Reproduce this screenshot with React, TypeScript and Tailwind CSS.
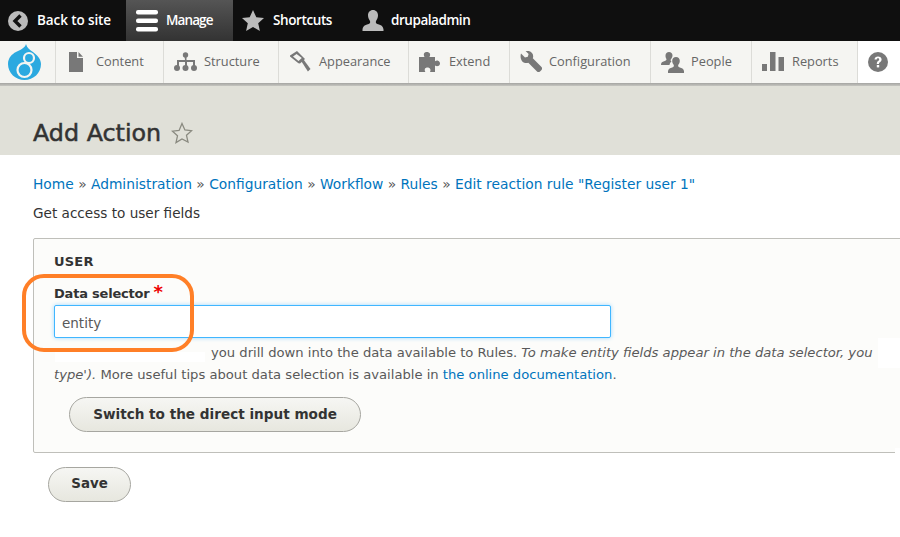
import React from "react";

const G = "#787878";
const FileI = () => <svg width={20} height={20} viewBox="0 0 20 20" className="shrink-0"><path fill={G} d="M3 0h8v6h6v14H3z" /><path fill={G} d="M12.500 0L17 4.700h-4.500z" /></svg>;
const TreeI = () => (
  <svg width={23} height={20} viewBox="0 0 23 20" className="shrink-0"><g fill={G}><circle cx="11.500" cy="3" r="2.700" /><circle cx="3" cy="16" r="3" /><circle cx="11.500" cy="16" r="3" /><circle cx="20" cy="16" r="3" /><path d="M10.500 4h2v4h8.500v6h-2v-4h-6v4h-2v-4h-6v4h-2V8h8z" /></g></svg>
);
const HammerI = () => (
  <svg width={22} height={22} viewBox="0 0 22 22" className="shrink-0"><g fill={G}><path d="M8 0l8 8-5 4.500-1.600-.2L1 5.500 1 4.500zM7.600 3L4 5.500l5.500 4.500 3.300-3z" fillRule="evenodd" /><path d="M12.500 10.500l2-2 7 9.500-2.600 2.500z" /></g></svg>
);
const PuzzleI = () => <svg width={22} height={20} viewBox="0 0 22 20" className="shrink-0"><path fill={G} d="M0 5h5.500C5 4 4.500 3 5 1.600 5.600.4 7 0 8 0s2.600.5 3 1.700c.3 1.200 0 2.300-.6 3.300H16v4.200c1-.6 2-.9 3-.5 1.500.5 2 1.700 2 2.800s-.6 2.200-2 2.600c-1 .3-2 0-3-.6V20h-5c.5-1 .7-2 .2-3-.5-1-1.500-1.500-2.700-1.500S6.200 16 5.800 17c-.3 1 0 2 .5 3H0z" /></svg>;
const WrenchI = () => <svg width={22} height={22} viewBox="0 0 22 22" className="shrink-0"><path fill={G} d="M1 2.500l4 4 2.800-.8.800-2.700-4-4C8 -.5 10.500.3 12 2c1.300 1.500 1.500 3.500.8 5.200L21.500 16c.8.800.8 2 0 3l-1.500 1.500c-.9.800-2.200.8-3 0l-8.700-8.800C6.500 12.500 4 12 2.300 10.500.5 8.700.2 5 1 2.500z" /></svg>;
const PeopleI = () => <svg width={23} height={21} viewBox="0 0 23 21" className="shrink-0"><g fill={G}><path d="M8 0c2 0 3.500 1.500 3.500 3.500 0 1.500-.8 2.700-1.600 3.700-.5 1-.3 1.800.6 2.300-1.200 1-1.800 2-2 3.500H0c0-2 .5-3 2.500-3.500 2-.7 3-1 3-2.500C4.700 6 4.500 4.800 4.500 3.500 4.500 1.500 6 0 8 0z" /><path d="M15 5c2.200 0 3.800 1.600 3.800 3.800 0 1.600-.6 3-1.500 4-.5 1.500 0 2.200 1.500 2.800 2 .7 3.700 1 4.200 3.400v2H7v-2c.5-2.400 2.200-2.700 4.200-3.400 1.500-.6 2-1.300 1.500-2.800-1-1-1.500-2.400-1.500-4C11.200 6.600 12.800 5 15 5z" /></g></svg>;
const BarsI = () => <svg width={22} height={20} viewBox="0 0 22 20" className="shrink-0"><g fill={G}><rect x="0" y="12" width="5" height="7" /><rect x="8" y="0" width="5.500" height="19" /><rect x="16.500" y="5" width="5.500" height="14" /></g></svg>;

const tray: [string, React.ReactNode, string, string][] = [
  ["Content", <FileI />, "w-[108px]", "gap-[10px]"],
  ["Structure", <TreeI />, "w-[115px]", "gap-[7px]"],
  ["Appearance", <HammerI />, "w-[130px]", "gap-[8px]"],
  ["Extend", <PuzzleI />, "w-[101px]", "gap-[8px]"],
  ["Configuration", <WrenchI />, "w-[141px]", "gap-[7px]"],
  ["People", <PeopleI />, "w-[101px]", "gap-[7px]"],
  ["Reports", <BarsI />, "w-[106px]", "gap-[8px]"],
];

export default function App() {
  return (
    <div className="relative w-[900px] h-[537px] overflow-hidden bg-white font-['DejaVu_Sans',sans-serif] text-[13.6px] text-[#333]">
      <div className="h-[41px] bg-[#0f0f0f] flex items-stretch text-white text-[13.5px] font-semibold font-['Open_Sans',sans-serif]">
        <div className="flex items-center w-[126px] pl-2 gap-[9px] tracking-[-0.1px]">
          <svg width="20" height="20" viewBox="0 0 20 20"><circle cx="10" cy="10" r="10" fill="#bbb" /><path d="M12.500 4.500L7 10l5.500 5.500" stroke="#111" strokeWidth="3.400" fill="none" /></svg>
          <span>Back to site</span>
        </div>
        <div className="flex items-center w-[107px] pl-[10px] gap-2 bg-gradient-to-b from-[#555] to-[#333] tracking-[-0.9px]">
          <svg width="22" height="22" viewBox="0 0 22 22"><g fill="#fff"><rect y="0" width="22" height="4.500" rx="2" /><rect y="8.500" width="22" height="4.500" rx="2" /><rect y="17" width="22" height="4.500" rx="2" /></g></svg>
          <span>Manage</span>
        </div>
        <div className="flex items-center w-[126px] pl-[9px] gap-[9px] tracking-[-0.4px]">
          <svg width="22" height="22" viewBox="0 0 22 22"><path fill="#bbb" d="M11 0l3.300 7.300 7.700.8-5.800 5.200 1.700 7.700L11 17l-6.900 4 1.700-7.700L0 8.100l7.700-.8z" /></svg>
          <span>Shortcuts</span>
        </div>
        <div className="flex items-center pl-[3px] gap-[7px] tracking-[-0.45px]">
          <svg width="22" height="22" viewBox="0 0 22 22"><path fill="#bbb" d="M11 0c3 0 5 2.300 5 5.300 0 2.300-1 4.200-2 5.600-.5 1.800 0 2.500 2 3.300 3 1 5 1.500 5.500 5.300v1.500H.5v-1.500C1 15.700 3 15.200 6 14.200c2-.8 2.500-1.500 2-3.300-1-1.400-2-3.300-2-5.600C6 2.300 8 0 11 0z" /></svg>
          <span>drupaladmin</span>
        </div>
      </div>

      <div className="h-[42px] flex bg-white font-['Open_Sans',sans-serif] text-[12.8px] text-[#666]">
        <div className="w-[56px] flex items-center pl-[8px] bg-[#f5f5f2] border-r border-[#dcdcd8]">
          <svg width="33" height="36" viewBox="0 0 33 36">
            <path fill="#2ba9e0" d="M18 0c1 4 4 6 7 8 4 3 8 7 8 12 0 9-7.500 16-16.500 16S0 29 0 20c0-6 4-10 8-12 4-2 9-4 10-8z" />
            <circle cx="21" cy="14" r="5" fill="#2ba9e0" stroke="#f5f5f2" strokeWidth="2.200" />
            <circle cx="16.500" cy="26" r="7" fill="#2ba9e0" stroke="#f5f5f2" strokeWidth="2.200" />
          </svg>
        </div>
        {tray.map(([t, ic, w, g]) => (
          <div key={t} className={`${w} ${g} flex items-center pl-[10px] bg-[#f5f5f2] border-r border-[#dcdcd8]`}>
            {ic}
            <span>{t}</span>
          </div>
        ))}
        <div className="flex-1 flex items-center pl-[10px]">
          <svg width="20" height="20" viewBox="0 0 20 20"><circle cx="10" cy="10" r="10" fill={G} /><path d="M6.500 7.500C6.700 5.500 8 4.500 10 4.500s3.600 1.100 3.600 3c0 2.500-2.600 2.500-2.600 4.500H8.800c0-3.200 2.400-3 2.400-4.500 0-.8-.5-1.200-1.200-1.200s-1.200.5-1.300 1.200z" fill="#fff" /><rect x="8.800" y="13" width="2.400" height="2.400" fill="#fff" /></svg>
        </div>
      </div>
      <div className="h-[3px] bg-gradient-to-b from-[#a5a5a2] to-[#c5c5c0]" />

      <div className="h-[69px] bg-[#e0e0d8] pl-[33px] pt-[25px] flex items-center gap-[10px] text-[#333]">
        <h1 className="text-[23.8px] leading-[32px] font-medium [-webkit-text-stroke:0.5px_#333]">Add Action</h1>
        <svg width="22" height="22" viewBox="0 0 22 22"><path fill="none" stroke="#8a8a80" strokeWidth="1.300" d="M11 1.500l2.900 6.500 6.600.7-5 4.600 1.500 6.800L11 17l-6 3.600 1.500-6.800-5-4.600 6.600-.7z" /></svg>
      </div>

      <div className="pl-[33px] pt-[20px] text-[#0074bd] text-[13.8px] h-[38px] leading-[19px] whitespace-nowrap">
        Home <span className="text-[#555]">»</span> Administration <span className="text-[#555]">»</span> Configuration <span className="text-[#555]">»</span> Workflow <span className="text-[#555]">»</span> Rules <span className="text-[#555]">»</span> Edit reaction rule "Register user 1"
      </div>
      <div className="pl-[33px] pt-[10px] leading-[20px] h-[45px]">Get access to user fields</div>

      <div className="ml-[33px] w-[900px] h-[215px] border border-[#bfbfba] rounded-[2px] bg-[#fcfcfa] pl-[20px] pt-[14px]">
        <div className="font-bold text-[13px] tracking-[0.2px] leading-[18px] text-[#333]">USER</div>
        <div className="mt-[14px] font-bold text-[13px] tracking-[-0.2px] leading-[18px] text-[#333]">Data selector<span className="text-[#e00] ml-1 text-[18px] leading-[10px]">*</span></div>
        <input readOnly value="entity" className="block mt-[2px] w-[557px] h-[33px] px-[7px] pt-[2px] bg-white border border-[#40b6ff] rounded-[2px] shadow-[0_0_4px_#9fd8ff] text-[13.5px] text-[#595959] outline-none" />
        <div className="mt-[4px] w-[830px] whitespace-nowrap text-[13.15px] leading-[22px] text-[#595959]">
          <div className="pl-[157px]">you drill down into the data available to Rules. <em>To make entity fields appear in the data selector, you</em></div>
          <div><em>type').</em> More useful tips about data selection is available in <span className="text-[#0074bd]">the online documentation</span>.</div>
        </div>
        <button className="block mt-[11px] ml-[15px] w-[292px] h-[35px] rounded-[20px] border border-[#a6a6a0] bg-gradient-to-b from-[#f6f6f3] to-[#e7e7df] font-bold text-[#333]">Switch to the direct input mode</button>
      </div>
      <button className="block mt-[14px] ml-[48px] w-[83px] h-[35px] rounded-[20px] border border-[#a6a6a0] bg-gradient-to-b from-[#f6f6f3] to-[#e7e7df] font-bold text-[13.4px] text-[#333]">Save</button>

      <div className="absolute left-[22px] top-[274px] w-[172px] h-[78px] rounded-[22px] border-[4px] border-[#ff7f27]" />
      <div className="absolute left-[878px] top-[338px] w-[22px] h-[30px] bg-white" />
      <div className="absolute left-[895px] top-[448px] w-[5px] h-[8px] bg-white" />
      <div className="absolute left-[55px] top-[352px] w-[150px] h-[10px] bg-white" />
    </div>
  );
}
